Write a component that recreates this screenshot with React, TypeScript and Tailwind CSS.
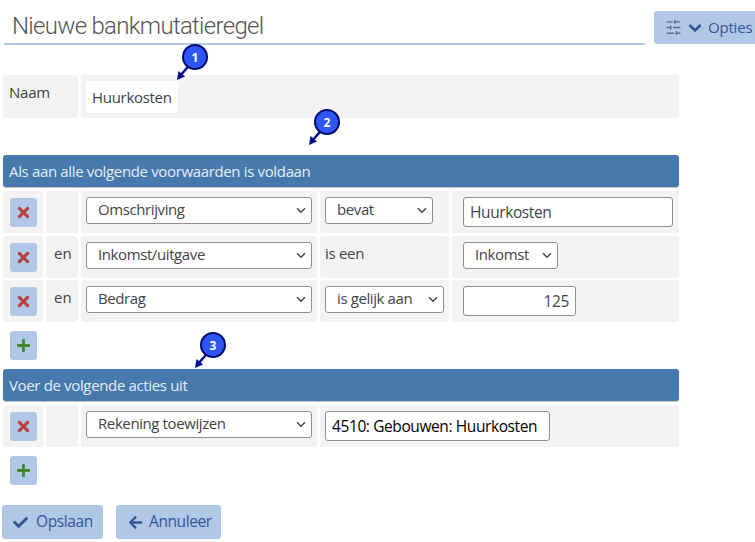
import { FaCheck, FaArrowLeft, FaPlus, FaTimes } from "react-icons/fa";
import { LuSlidersHorizontal } from "react-icons/lu";

const Select = ({ value, width }: { value: string; width: string }) => (
  <div className={`relative h-[27px] ${width}`}>
    <select
      defaultValue={value}
      className="w-full h-full appearance-none bg-white border border-[#8f8f8f] rounded-[3px] pl-[11px] pr-5 pb-[3px] text-[15px] leading-[22px] tracking-[-0.4px] text-[#444] outline-none"
    >
      <option>{value}</option>
    </select>
    <svg className="absolute right-[6px] top-[10px] pointer-events-none" width="10" height="7" viewBox="0 0 10 7" fill="none">
      <path d="M1 1.2l4 4 4-4" stroke="#444" strokeWidth="1.4" />
    </svg>
  </div>
);

const TextInput = ({ value, className }: { value: string; className: string }) => (
  <input
    readOnly
    value={value}
    className={`h-[30px] bg-white border border-[#8f8f8f] rounded-[3px] px-[6px] text-[15.5px] tracking-[-0.4px] text-[#444] outline-none ${className}`}
  />
);

const Cell = ({ children, className = "" }: { children?: React.ReactNode; className?: string }) => (
  <div className={`bg-[#f3f3f3] rounded-[3px] ${className}`}>{children}</div>
);

const IconButton = ({ plus }: { plus?: boolean }) => (
  <button className="w-[27px] h-[29px] bg-[#b0c8e6] rounded-[3px] flex items-center justify-center">
    {plus ? <FaPlus className="text-[15px] text-[#3f8a2c]" /> : <FaTimes className="text-[17px] text-[#b8423f]" />}
  </button>
);

const Bar = ({ title }: { title: string }) => (
  <div className="h-[32px] bg-[#4679ad] rounded-[3px] pl-[6px] pt-[1px] flex items-center text-[15px] tracking-[-0.35px] text-[#e6edf5] shadow-[0_1px_1px_rgba(0,0,0,0.25)]">
    {title}
  </div>
);

const Marker = ({ n, className }: { n: number; className: string }) => (
  <svg className={`absolute ${className}`} width="40" height="40" viewBox="0 0 40 40">
    <path d="M22 18L9 33" stroke="#000a8c" strokeWidth="2.5" />
    <path d="M6 37l1.5-9 6.5 5.5z" fill="#000a8c" />
    <circle cx="24" cy="14" r="12" fill="#2f55f5" stroke="#000a6e" strokeWidth="2" />
    <text x="24" y="18.5" textAnchor="middle" fontSize="12" fontWeight="700" fill="#fff" fontFamily="Open Sans, sans-serif">{n}</text>
  </svg>
);

const Row = ({ label, children }: { label?: string; children: React.ReactNode }) => (
  <div className="grid grid-cols-[40px_32px_236px_129px_227px] gap-x-[3px] h-[42px]">
    <Cell className="pl-[7px] pt-[7px]"><IconButton /></Cell>
    <Cell className="pl-[8px] pt-[6px] text-[15px] leading-[22px] text-[#444]">{label}</Cell>
    {children}
  </div>
);

const App = () => {
  return (
    <div className="relative w-[755px] h-[542px] overflow-hidden bg-white font-['Open_Sans',sans-serif] text-[#444]">
      <div className="flex items-start pl-[4px] pt-[11px] h-[75px]">
        <div className="w-[641px] h-[34px] border-b-[2px] border-[#b0c8e6] pl-[8px] font-['Roboto',sans-serif] font-light text-[24px] tracking-[-0.7px] leading-[30px] text-[#555]">
          Nieuwe bankmutatieregel
        </div>
        <button className="ml-[9px] w-[101px] h-[33px] shrink-0 bg-[#b0c8e6] rounded-l-[3px] flex items-center pl-[11px] gap-[6px] text-[15px] text-[#34559c] whitespace-nowrap">
          <LuSlidersHorizontal className="text-[17px] text-[#5a6f96]" />
          <svg width="14" height="10" viewBox="0 0 14 10" fill="none">
            <path d="M1.5 2l5.5 5.5L12.5 2" stroke="#34559c" strokeWidth="2.6" />
          </svg>
          <span className="tracking-[-0.2px]">Opties</span>
        </button>
      </div>

      <div className="pl-[3px]">
        <div className="grid grid-cols-[75px_598px] gap-x-[3px] h-[43px]">
          <Cell className="pl-[6px] pt-[6px] text-[15px] leading-[22px] tracking-[-0.2px]">Naam</Cell>
          <Cell className="pl-[5px] pt-[6px]">
            <div className="w-[92px] h-[32px] bg-white rounded-[3px] pl-[6px] flex items-center text-[15px] leading-[22px] tracking-[-0.3px]">Huurkosten</div>
          </Cell>
        </div>

        <div className="mt-[37px] w-[676px]"><Bar title="Als aan alle volgende voorwaarden is voldaan" /></div>

        <div className="mt-[4px] flex flex-col gap-y-[2.5px] w-[676px]">
          <Row>
            <Cell className="pl-[5px] pt-[6px]"><Select value="Omschrijving" width="w-[226px]" /></Cell>
            <Cell className="pl-[5px] pt-[6px]"><Select value="bevat" width="w-[108px]" /></Cell>
            <Cell className="pl-[11px] pt-[6px]"><TextInput value="Huurkosten" className="w-[210px]" /></Cell>
          </Row>
          <Row label="en">
            <Cell className="pl-[5px] pt-[6px]"><Select value="Inkomst/uitgave" width="w-[226px]" /></Cell>
            <Cell className="pl-[5px] pt-[6px] text-[15px] leading-[22px] tracking-[-0.3px]">is een</Cell>
            <Cell className="pl-[11px] pt-[6px]"><Select value="Inkomst" width="w-[95px]" /></Cell>
          </Row>
          <Row label="en">
            <Cell className="pl-[5px] pt-[6px]"><Select value="Bedrag" width="w-[226px]" /></Cell>
            <Cell className="pl-[5px] pt-[6px]"><Select value="is gelijk aan" width="w-[119px]" /></Cell>
            <Cell className="pl-[11px] pt-[6px]"><TextInput value="125" className="w-[113px] text-right" /></Cell>
          </Row>
        </div>

        <div className="mt-[9px] pl-[7px]"><IconButton plus /></div>

        <div className="mt-[9px] w-[676px]"><Bar title="Voer de volgende acties uit" /></div>

        <div className="mt-[4px] w-[676px]">
          <Row>
            <Cell className="pl-[5px] pt-[6px]"><Select value="Rekening toewijzen" width="w-[226px]" /></Cell>
            <Cell className="col-span-2 pl-[5px] pt-[6px]"><TextInput value="4510: Gebouwen: Huurkosten" className="w-[225px] text-black" /></Cell>
          </Row>
        </div>

        <div className="mt-[9px] pl-[7px]"><IconButton plus /></div>

        <div className="mt-[20px] flex gap-x-[13px] -ml-px">
          <button className="w-[101px] h-[34px] bg-[#b0c8e6] rounded-[3px] flex items-center pl-[11px] gap-[8px] text-[15.5px] tracking-[-0.4px] text-[#34559c]">
            <FaCheck className="text-[15px]" />Opslaan
          </button>
          <button className="w-[105px] h-[34px] bg-[#b0c8e6] rounded-[3px] flex items-center pl-[12px] gap-[6px] text-[15.5px] tracking-[-0.4px] text-[#34559c]">
            <FaArrowLeft className="text-[15px]" />Annuleer
          </button>
        </div>
      </div>

      <Marker n={1} className="left-[171px] top-[43px]" />
      <Marker n={2} className="left-[303px] top-[108px]" />
      <Marker n={3} className="left-[189px] top-[331px]" />
    </div>
  );
};

export default App;
